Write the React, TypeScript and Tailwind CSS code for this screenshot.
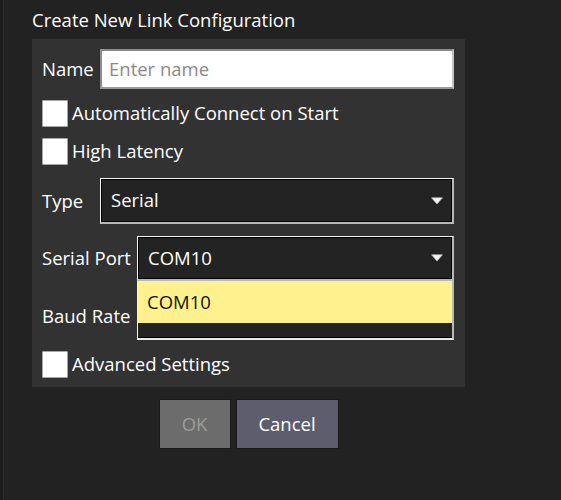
import React from "react";

function Arrow() {
  return (
    <svg width="12" height="8" viewBox="0 0 12 8" className="absolute right-[9px] top-1/2 -translate-y-1/2">
      <path d="M0.5 0.8 L11.5 0.8 L6 7 Z" fill="#f4f4f4" stroke="#c8c8c8" strokeWidth="0.6" />
    </svg>
  );
}

function Combo({ value, className }: { value: string; className: string }) {
  return (
    <div
      className={`relative flex items-center bg-[#232323] border-t border-l border-t-[#f2f2f2] border-l-[#f2f2f2] border-r-2 border-b-2 border-r-[#b8b8b8] border-b-[#b8b8b8] shadow-[inset_0_0_0_1px_#000] pl-[10px] text-white ${className}`}
    >
      <span>{value}</span>
      <Arrow />
    </div>
  );
}

function Check({ label }: { label: string }) {
  return (
    <div className="flex items-center h-[27px]">
      <div className="w-[26px] h-[27px] bg-white border border-[#a8a8a8] rounded-[1px]" />
      <span className="ml-[4px] text-white">{label}</span>
    </div>
  );
}

export default function App() {
  return (
    <div
      className="w-[561px] h-[500px] bg-[#222222] relative overflow-hidden text-[18.5px] leading-none"
      style={{ fontFamily: '"Open Sans", "Noto Sans", sans-serif' }}
    >
      <div className="absolute left-0 top-0 bottom-0 w-[4px] bg-[#1d1d1d] border-r border-[#2b2b2b]" />
      <div className="pl-[32px] pt-[11px] h-[39px] text-white">Create New Link Configuration</div>
      <div className="ml-[32px] w-[433px] h-[348px] bg-[#323232] pl-[10px] pr-[11px] pt-[10px] flex flex-col">
        <div className="flex items-center h-[40px]">
          <span className="w-[58px] text-white">Name</span>
          <div className="flex-1 h-[40px] bg-white border-2 border-[#8c8c8c] border-r-[#c4c4c4] border-b-[#9a9a9a] flex items-center pl-[7px] text-[#8a8a8a]">
            Enter name
          </div>
        </div>
        <div className="mt-[11px]">
          <Check label="Automatically Connect on Start" />
        </div>
        <div className="mt-[11px]">
          <Check label="High Latency" />
        </div>
        <div className="flex items-center mt-[13px] h-[46px]">
          <span className="w-[58px] text-white">Type</span>
          <Combo value="Serial" className="flex-1 h-[46px]" />
        </div>
        <div className="flex items-center mt-[12px] h-[45px]">
          <span className="w-[95px] text-white">Serial Port</span>
          <Combo value="COM10" className="flex-1 h-[45px]" />
        </div>
        <div className="relative flex items-center mt-[13px] h-[45px]">
          <span className="w-[95px] text-white">Baud Rate</span>
          <Combo value="" className="flex-1 h-[45px]" />
          <div className="absolute left-[95px] right-0 top-[-13px] h-[59px] bg-[#232323] border-l border-l-[#f2f2f2] border-r-2 border-r-[#b8b8b8] border-b-2 border-b-[#e8e8e8] shadow-[inset_0_-1px_0_0_#000] flex flex-col">
            <div className="h-[42px] bg-[#fff18e] flex items-center pl-[9px] text-[#111]">COM10</div>
          </div>
        </div>
        <div className="mt-[12px]">
          <Check label="Advanced Settings" />
        </div>
      </div>
      <div className="flex justify-center w-[433px] ml-[32px] mt-[12px] gap-[5px]">
        <div className="w-[72px] h-[50px] bg-[#6c6c6c] border border-[#1a1a1a] flex items-center justify-center text-[#9c9c9c]">OK</div>
        <div className="w-[103px] h-[50px] bg-[#5e5d6d] border border-[#1a1a1a] flex items-center justify-center text-white">Cancel</div>
      </div>
    </div>
  );
}
